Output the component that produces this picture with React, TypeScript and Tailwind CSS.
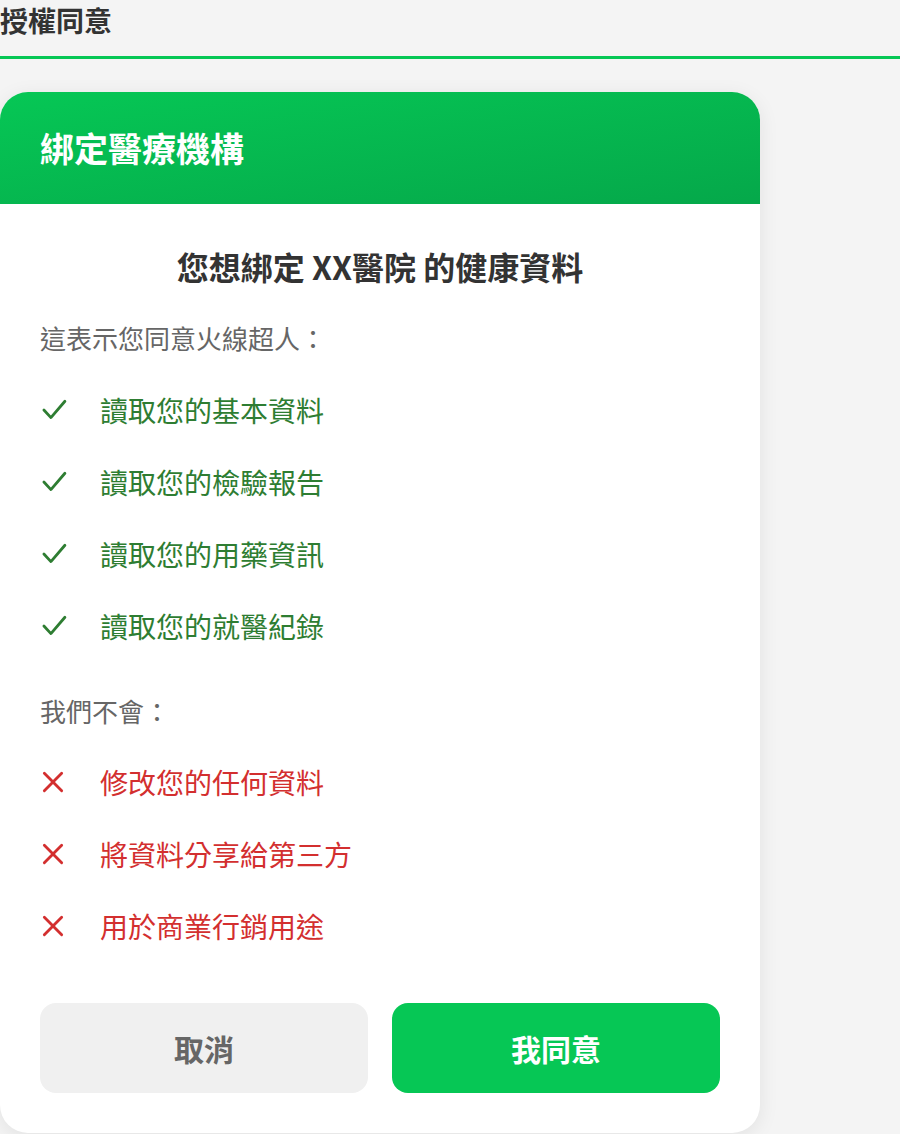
import React from "react";

const font = { fontFamily: '"Noto Sans CJK TC", "Noto Sans", sans-serif' };

function Check() {
  return (
    <svg width="28" height="28" viewBox="0 0 24 24" fill="none" stroke="#2e7d32" strokeWidth="2.4" strokeLinecap="round" strokeLinejoin="round">
      <path d="M2.5 12 L8.5 18.5 L20.5 4.5" />
    </svg>
  );
}

function Cross() {
  return (
    <svg width="26" height="26" viewBox="0 0 24 24" fill="none" stroke="#d32f2f" strokeWidth="2.6" strokeLinecap="round">
      <path d="M4 4 L20 20 M20 4 L4 20" />
    </svg>
  );
}

export default function App() {
  const allow = ["讀取您的基本資料", "讀取您的檢驗報告", "讀取您的用藥資訊", "讀取您的就醫紀錄"];
  const deny = ["修改您的任何資料", "將資料分享給第三方", "用於商業行銷用途"];
  return (
    <div className="min-h-[1134px] bg-[#f4f4f4]" style={font}>
      <div className="h-[59px] border-b-[3px] border-[#06c755] flex items-start">
        <h1 className="h-[40px] flex items-center text-[28px] font-bold text-[#333333] leading-none">授權同意</h1>
      </div>
      <div className="mt-[33px] w-[760px] rounded-[28px] bg-white overflow-hidden shadow-[0_4px_20px_rgba(0,0,0,0.08)]">
        <div className="h-[112px] px-10 flex items-center bg-gradient-to-br from-[#06c755] to-[#05a84a]">
          <span className="text-[34px] font-bold text-white leading-none">綁定醫療機構</span>
        </div>
        <div className="px-10 pt-10 pb-10">
          <div className="h-[44px] flex items-center justify-center text-[32px] font-bold text-[#333333]">您想綁定 XX醫院 的健康資料</div>
          <div className="mt-[31px] h-[36px] flex items-center text-[26px] text-[#666666]">這表示您同意火線超人：</div>
          <div className="mt-[19px]">
            {allow.map((t) => (
              <div key={t} className="h-[72px] flex items-center">
                <div className="w-[60px] flex items-center pl-[1px]"><Check /></div>
                <span className="text-[28px] text-[#2e7d32]">{t}</span>
              </div>
            ))}
          </div>
          <div className="mt-[30px] h-[36px] flex items-center text-[26px] text-[#666666]">我們不會：</div>
          <div className="mt-[18px]">
            {deny.map((t) => (
              <div key={t} className="h-[72px] flex items-center">
                <div className="w-[60px] flex items-center"><Cross /></div>
                <span className="text-[28px] text-[#d32f2f]">{t}</span>
              </div>
            ))}
          </div>
          <div className="mt-[41px] grid grid-cols-2 gap-6">
            <button className="h-[90px] rounded-[16px] bg-[#f0f0f0] text-[30px] font-bold text-[#666666]">取消</button>
            <button className="h-[90px] rounded-[16px] bg-[#06c755] text-[30px] font-bold text-white">我同意</button>
          </div>
        </div>
      </div>
    </div>
  );
}
